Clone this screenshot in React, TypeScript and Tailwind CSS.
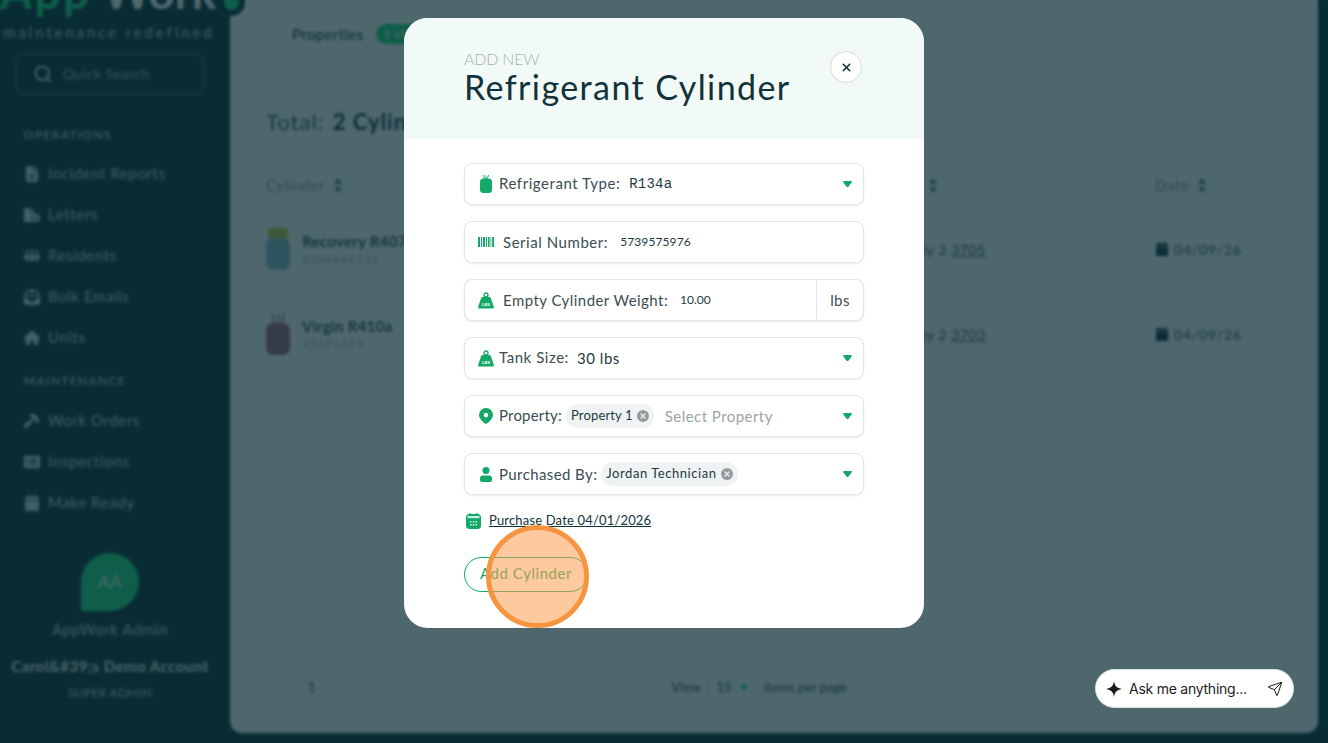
import React from 'react';
import { Search, Send, X } from 'lucide-react';
import { FaFileLines, FaFileCirclePlus, FaPeopleGroup, FaEnvelopeOpenText, FaHouse, FaHammer, FaRectangleList, FaCalendar } from 'react-icons/fa6';
import type { IconType } from 'react-icons';

const font = "font-['Lato','Liberation_Sans',sans-serif]";

function SortArrows() {
  return (
    <svg width="8" height="17" viewBox="0 0 8 17" className="shrink-0 fill-[#5d7d83]">
      <path d="M4 1 8 7H0zM4 16 0 10h8z" />
    </svg>
  );
}

function Caret() {
  return (
    <svg width="9" height="7" viewBox="0 0 10 8" className="ml-auto shrink-0 fill-[#12a867]">
      <path d="M1.2 0h7.6c1 0 1.500 1 .9 1.800L6 6.600c-.5.6-1.500.6-2 0L.3 1.800C-.3 1 .2 0 1.200 0z" />
    </svg>
  );
}

function RowCylinder({ body, top, crown }: { body: string; top: string; crown: boolean }) {
  return (
    <svg width="24" height="42" viewBox="0 0 24 42" className="shrink-0">
      {crown ? (
        <path d="M6 0l3 12M18 0l-3 12M12 1v10" stroke={top} fill="none" strokeWidth="1.500" />
      ) : (
        <rect x="2" y="0" width="20" height="10" fill={top} />
      )}
      <rect x="0" y="10" width="24" height="32" rx="7" fill={body} />
    </svg>
  );
}

function ModalCylinder() {
  return (
    <svg width="12" height="18" viewBox="0 0 12 18" className="ml-[2px] shrink-0">
      <path d="M3.500 0l1.200 4M8.500 0 7.300 4M6 .5V4" stroke="#12a867" fill="none" strokeWidth=".9" />
      <rect y="3.500" width="12" height="14.500" rx="3.500" fill="#12a867" />
    </svg>
  );
}

function BarcodeIcon() {
  return (
    <svg width="16" height="10" viewBox="0 0 16 10" className="shrink-0 fill-[#12a867]">
      <path d="M0 0h2v10H0zM3 0h1v10H3zM5 0h2v10H5zM8 0h1v10H8zM10 0h1.500v10H10zM12.500 0h.8v10h-.8zM14.200 0h1.800v10h-1.800z" />
    </svg>
  );
}

function WeightIcon() {
  return (
    <svg width="16" height="17" viewBox="0 0 16 17" className="shrink-0">
      <circle cx="8" cy="3" r="2" fill="none" stroke="#12a867" strokeWidth="1.300" />
      <path d="M5 5h6c1 0 1.500.5 2 1.500l2.800 8.500c.2.8-.2 1.500-1 1.500H1.200c-.8 0-1.200-.7-1-1.500L3 6.500C3.500 5.500 4 5 5 5z" fill="#12a867" />
      <text x="8" y="13.500" textAnchor="middle" fontSize="4.500" fontWeight="700" fill="#ffffff">LBS</text>
    </svg>
  );
}

function PinIcon() {
  return (
    <svg width="14" height="16" viewBox="0 0 14 16" className="shrink-0">
      <path fillRule="evenodd" d="M7 0a7 7 0 0 1 7 7c0 3.600-3.500 6.800-7 9-3.500-2.200-7-5.400-7-9a7 7 0 0 1 7-7zm0 4.800a2.300 2.300 0 1 0 0 4.600 2.300 2.300 0 0 0 0-4.600z" fill="#12a867" />
    </svg>
  );
}

function PersonIcon() {
  return (
    <svg width="12" height="15" viewBox="0 0 12 15" className="shrink-0 fill-[#12a867]">
      <circle cx="6" cy="3.500" r="3.500" />
      <path d="M3 8.500h6a3 3 0 0 1 3 3V13a2 2 0 0 1-2 2H2a2 2 0 0 1-2-2v-1.500a3 3 0 0 1 3-3z" />
    </svg>
  );
}

function CalendarIcon() {
  return (
    <svg width="15" height="16" viewBox="0 0 15 16" className="shrink-0">
      <path d="M4 0v2M11 0v2" stroke="#12a867" strokeWidth="1.300" />
      <rect y="1" width="15" height="15" rx="3.500" fill="#12a867" />
      <rect x="1.500" y="3" width="12" height="2.200" fill="#c8efdb" />
      <path d="M4 8h1.500v1.500H4zM6.800 8h1.500v1.500H6.800zM9.500 8H11v1.500H9.500zM4 11h1.500v1.500H4zM6.800 11h1.500v1.500H6.800zM9.500 11H11v1.500H9.500z" fill="#d9f5e7" />
    </svg>
  );
}

function Chip({ label, className }: { label: string; className: string }) {
  return (
    <span className={`ml-1 flex h-6 items-center gap-1 rounded-full bg-[#eff3f3] px-[5px] text-[13px] text-[#1d3a40] ${className}`}>
      {label}
      <span className="flex size-3 items-center justify-center rounded-full bg-[#939b9d]">
        <X size={8} strokeWidth={4} className="text-[#e8ecec]" />
      </span>
    </span>
  );
}

function Field({ children }: { children: React.ReactNode }) {
  return (
    <div className="flex h-[42px] items-center rounded-lg border border-[#e3e6e6] bg-white pl-[13px] pr-[11px] shadow-[0_1px_2px_rgba(0,0,0,0.08)]">
      {children}
    </div>
  );
}

function Label({ children, className }: { children: React.ReactNode; className: string }) {
  return <span className={`text-[15px] text-[#3b4d52] ${className}`}>{children}</span>;
}

const operations = [
  { label: 'Incident Reports', Icon: FaFileLines },
  { label: 'Letters', Icon: FaFileCirclePlus },
  { label: 'Residents', Icon: FaPeopleGroup },
  { label: 'Bulk Emails', Icon: FaEnvelopeOpenText },
  { label: 'Units', Icon: FaHouse },
];

const maintenance = [
  { label: 'Work Orders', Icon: FaHammer },
  { label: 'Inspections', Icon: FaRectangleList },
  { label: 'Make Ready', Icon: FaCalendar },
];

function NavItem({ label, Icon }: { label: string; Icon: IconType }) {
  return (
    <div className="flex h-[41px] items-center gap-2 pl-6 text-[15px] tracking-[.6px] text-[#c5d2d5]">
      <Icon size={16} className="shrink-0 text-[#d7e0e2]" />
      {label}
    </div>
  );
}

function Sidebar() {
  return (
    <aside className="relative z-10 flex w-[230px] shrink-0 flex-col">
      <div className="relative -mt-[33px] flex h-[50px] items-end text-[46px] leading-[50px] font-bold whitespace-nowrap">
        <span className="tracking-[2.5px] text-[#1ade7d]">App</span>
        <span className="ml-[11px] text-white">Work</span>
        <span className="absolute left-[218px] top-[22px] flex size-[27px] items-center justify-center rounded-full bg-[#0a2c34]">
          <span className="size-[15px] rounded-full bg-[#1ade7d]" />
        </span>
      </div>
      <p className="mt-[6px] pl-[3px] text-[15px] leading-[18px] tracking-[2.9px] whitespace-nowrap text-[#c3d0d3]">maintenance redefined</p>
      <div className="mx-4 mt-[12px] flex h-[41px] w-[188px] items-center gap-[10px] rounded-lg border border-[#4f6b72] pl-4 text-[14px] tracking-[.5px] text-[#9fb2b6]">
        <Search size={20} className="text-[#ffffff]" />
        Quick Search
      </div>
      <p className="mt-[33px] pl-6 text-[12px] leading-4 font-semibold tracking-[1.300px] text-[#b9c7ca]">OPERATIONS</p>
      <div className="mt-[10px] flex flex-col">
        {operations.map((item) => (
          <NavItem key={item.label} {...item} />
        ))}
      </div>
      <p className="mt-[15px] pl-6 text-[12px] leading-4 font-semibold tracking-[1.300px] text-[#b9c7ca]">MAINTENANCE</p>
      <div className="mt-[11px] flex flex-col">
        {maintenance.map((item) => (
          <NavItem key={item.label} {...item} />
        ))}
      </div>
      <div className="mt-[30px] flex flex-col items-center pr-[10px]">
        <div className="flex size-[58px] items-center justify-center rounded-t-full rounded-br-full bg-[#1ade7d] text-[17px] tracking-[.5px] text-white">AA</div>
        <p className="mt-[8px] text-[15px] leading-5 tracking-[.6px] text-[#c5d2d5]">AppWork Admin</p>
        <p className="mt-[17px] text-[15px] leading-5 font-bold tracking-[.5px] whitespace-nowrap text-[#e6eeee]">Carol&amp;#39;s Demo Account</p>
        <p className="mt-[9px] text-[12px] leading-4 tracking-[.3px] text-[#c5d2d5]">SUPER ADMIN</p>
      </div>
    </aside>
  );
}

function Row({ name, serial, unit, body, top, crown }: { name: string; serial: string; unit: string; body: string; top: string; crown: boolean }) {
  return (
    <div className="grid h-[85px] grid-cols-[1fr_300px_125px] items-center border-b border-[#e2e7e7]">
      <div className="flex items-center gap-3">
        <RowCylinder body={body} top={top} crown={crown} />
        <div>
          <p className="text-[15px] leading-5 font-bold tracking-[.3px] text-[#3e5257]">{name}</p>
          <p className="text-[12px] leading-4 tracking-[.8px] text-[#a8b3b5]">{serial}</p>
        </div>
      </div>
      <p className="pl-[21px] text-[14px] tracking-[.6px] text-[#3e5257]">Property 2 <span className="underline">{unit}</span></p>
      <p className="flex items-center gap-[5px] text-[14px] tracking-[.8px] text-[#3e5257]">
        <FaCalendar size={14} className="text-[#0a2c34]" />
        04/09/26
      </p>
    </div>
  );
}

function MainPanel() {
  return (
    <main className="min-w-0 flex-1 rounded-b-xl bg-white pl-9 pr-[38px]">
      <div className="mt-[13px] flex h-[42px] w-[320px] items-center rounded-full border border-[#d9e0e0] pl-[25px] text-[15px] font-semibold tracking-[.3px] text-[#3e5257]">
        Properties
        <span className="ml-3 rounded-full bg-[#1ade7d] px-2 py-[1px] text-[12px] text-white">1 of 2</span>
      </div>
      <h2 className="mt-[53px] text-[22px] leading-7 tracking-[1px] text-[#3e5257]">
        Total: <span className="ml-[2px] font-bold text-[#1b353b]">2 Cylinders</span>
      </h2>
      <div className="mt-[31px] grid h-[40px] grid-cols-[1fr_300px_125px] items-center border-b border-[#e2e7e7] text-[15px] tracking-[.5px] text-[#8d9a9d]">
        <span className="-mt-[2px] flex items-center gap-[9px]">Cylinder <SortArrows /></span>
        <span className="-mt-[2px] flex items-center gap-[9px] pl-[35px]">Unit <SortArrows /></span>
        <span className="-mt-[2px] flex items-center gap-[9px]">Date <SortArrows /></span>
      </div>
      <Row name="Recovery R407c" serial="4334646161" unit="3705" body="#8fbccb" top="#c8c840" crown={false} />
      <Row name="Virgin R410a" serial="4569+875" unit="3703" body="#a8607f" top="#a8607f" crown />
      <div className="mt-[297px] flex items-center pl-[42px] text-[13px] text-[#3e5257]">
        <span>1</span>
        <span className="ml-[356px]">View</span>
        <span className="ml-[8px] flex h-7 w-[47px] items-center justify-center gap-2 rounded border border-[#d9e0e0]">15
          <svg width="8" height="6" viewBox="0 0 8 6" className="fill-[#1ade7d]"><path d="M0 0h8L4 6z" /></svg>
        </span>
        <span className="ml-[8px]">items per page</span>
      </div>
    </main>
  );
}

function Modal() {
  return (
    <div className="relative w-[520px] overflow-hidden rounded-3xl bg-white">
      <div className="flex h-[121px] items-start justify-between bg-[#f1faf6] pl-[60px] pr-[62px] pt-[31px]">
        <div>
          <p className="text-[16px] leading-5 font-light tracking-[-.2px] text-[#a9b3b3]">ADD NEW</p>
          <h1 className="-mt-[1px] text-[34px] leading-[38px] tracking-[1.4px] whitespace-nowrap text-[#11323a]">Refrigerant Cylinder</h1>
        </div>
        <button className="mt-[2px] flex size-8 items-center justify-center rounded-full border border-[#d7dada] bg-white">
          <X size={13} strokeWidth={2.800} className="text-[#11323a]" />
        </button>
      </div>
      <div className="h-[489px] px-[60px] pt-[24px]">
        <div className="flex flex-col gap-4">
          <Field>
            <ModalCylinder />
            <Label className="-mt-[2px] ml-[7px] tracking-[.55px]">Refrigerant Type:</Label>
            <span className="ml-[9px] font-['Liberation_Mono',monospace] text-[14px] tracking-[.2px] text-[#1d3a40]">R134a</span>
            <Caret />
          </Field>
          <Field>
            <BarcodeIcon />
            <Label className="ml-[9px] tracking-[.55px]">Serial Number:</Label>
            <span className="ml-3 text-[12px] tracking-[.1px] text-[#1d3a40]">5739575976</span>
          </Field>
          <div className="flex h-[42px] items-center rounded-lg border border-[#e3e6e6] bg-white pl-[13px] shadow-[0_1px_2px_rgba(0,0,0,0.08)]">
            <WeightIcon />
            <Label className="ml-[9px] tracking-[.45px]">Empty Cylinder Weight:</Label>
            <span className="ml-3 text-[12px] text-[#1d3a40]">10.00</span>
            <span className="ml-auto flex h-full w-[47px] items-center justify-center border-l border-[#e3e6e6] text-[15px] tracking-[.4px] text-[#3b4d52]">lbs</span>
          </div>
          <Field>
            <WeightIcon />
            <Label className="-mt-[2px] ml-[5px] tracking-[.55px]">Tank Size:</Label>
            <span className="ml-2 text-[15px] tracking-[.55px] text-[#1d3a40]">30 lbs</span>
            <Caret />
          </Field>
          <Field>
            <span className="ml-[1px]"><PinIcon /></span>
            <Label className="-mt-[2px] ml-[6px] tracking-[.2px]">Property:</Label>
            <Chip label="Property 1" className="tracking-[.15px]" />
            <span className="ml-[11px] text-[15px] tracking-[.45px] text-[#9ca3a6]">Select Property</span>
            <Caret />
          </Field>
          <Field>
            <span className="ml-[2px]"><PersonIcon /></span>
            <Label className="ml-[7px] tracking-[.4px]">Purchased By:</Label>
            <Chip label="Jordan Technician" className="tracking-[.55px]" />
            <Caret />
          </Field>
        </div>
        <div className="mt-[16px] flex items-center gap-2">
          <span className="ml-[2px]"><CalendarIcon /></span>
          <span className="text-[13px] tracking-[.17px] text-[#11323a] underline">Purchase Date 04/01/2026</span>
        </div>
        <button className="mt-[26px] h-[35px] w-[124px] rounded-full border border-[#12a867] pb-[2px] text-[15px] tracking-[.55px] text-[#12a867]">Add Cylinder</button>
      </div>
      {/* click marker from the recording */}
      <span className="absolute left-[82px] top-[507px] size-[103px] rounded-full border-[5px] border-[#f79440] bg-[#fb9d50]/55" />
    </div>
  );
}

export default function App() {
  return (
    <div className={`relative flex h-screen w-full overflow-hidden bg-[#0a2c34] pb-[10px] pr-[10px] ${font}`}>
      <Sidebar />
      <MainPanel />
      <div className="absolute inset-0 z-20 bg-[#0a2c34]/[.72] backdrop-blur-[1.5px]" />
      <div className="absolute left-[404px] top-[18px] z-30">
        <Modal />
      </div>
      <div className="absolute bottom-[35px] right-[34px] z-30 flex h-[39px] w-[199px] items-center rounded-full border border-[#dde1e1] bg-white pl-[10px] pr-[10px] font-['Inter',sans-serif] text-[14px] tracking-[-.25px] text-[#1c1c1c]">
        <svg width="16" height="16" viewBox="0 0 16 16" className="fill-[#1c1c1c]">
          <path d="M8 0c.8 5 2.500 7 8 8-5.500 1-7.200 3-8 8-.8-5-2.500-7-8-8 5.500-1 7.200-3 8-8z" />
        </svg>
        <span className="ml-[7px]">Ask me anything...</span>
        <Send size={16} strokeWidth={1.500} className="ml-auto" />
      </div>
    </div>
  );
}
